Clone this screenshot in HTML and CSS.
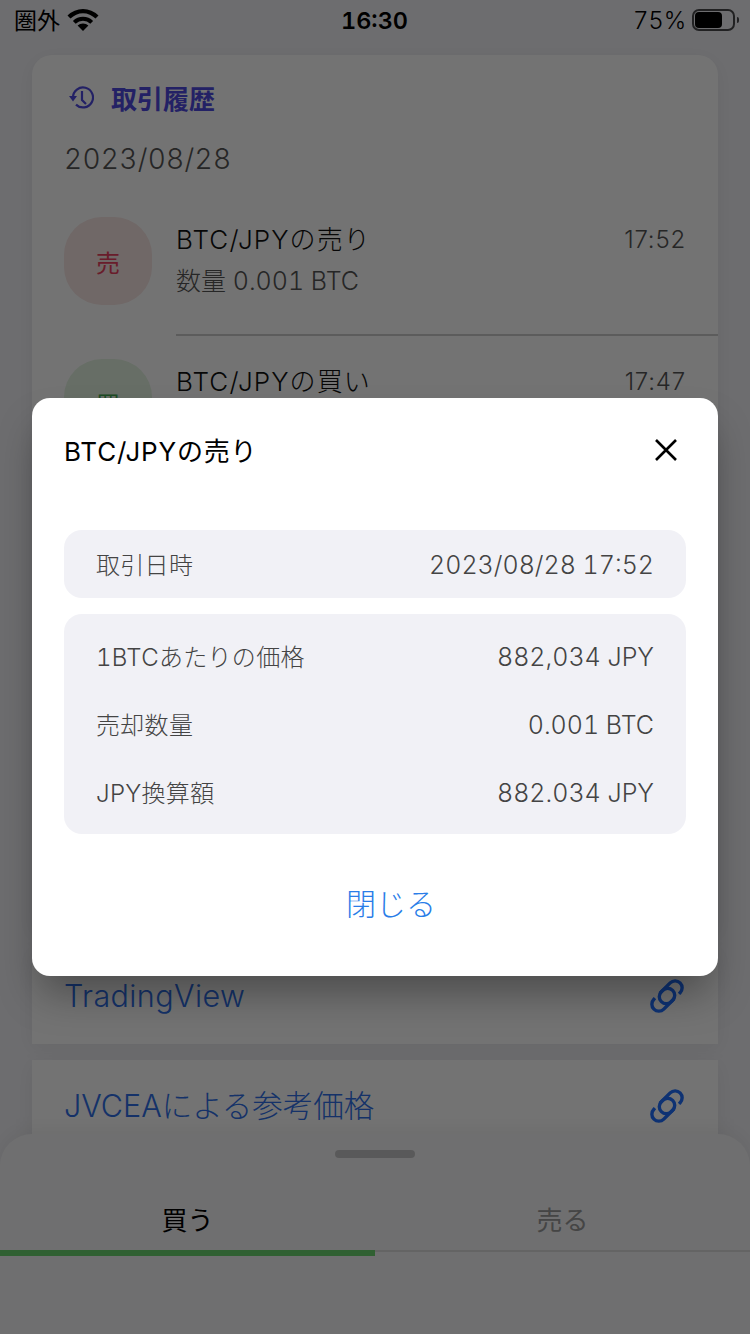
FILE: index.html
```html
<!DOCTYPE html>
<html lang="ja">
  <head>
    <meta charset="utf-8">
    <title>取引履歴</title>
    <link rel="stylesheet" href="styles.css">
  </head>
  <body>
    <div class="screen">
      <!-- Status bar -->
      <div class="status-bar">
        <div class="status-left">
          <span class="carrier">圏外</span>
          <svg class="wifi" viewBox="-1 0 32 22" width="32" height="22">
            <path d="M-.5 6.500A22 22 0 0 1 30.500 6.500L27.500 9.500A17.700 17.700 0 0 0 2.500 9.500Z" />
            <path d="M4.900 11.900A14.300 14.300 0 0 1 25.100 11.900L22.300 14.700A10.300 10.300 0 0 0 7.700 14.700Z" />
            <path d="M9.600 16.600A7.700 7.700 0 0 1 20.400 16.600L15 22Z" />
          </svg>
        </div>
        <div class="status-time">16:30</div>
        <div class="status-right">
          <span>75%</span>
          <div class="battery"><div class="battery-level"></div></div>
          <div class="battery-cap"></div>
        </div>
      </div>

      <!-- History card -->
      <section class="card history">
        <h2 class="history-title">
          <svg viewBox="0 0 28 28" width="28" height="28">
            <path class="line-icon" d="M7 13.500a10 10 0 1 1 3 7.100" />
            <path class="line-icon" d="M16 7V16L20 20" />
            <path class="arrow-icon" d="M3 12H11L7 17.500z" />
          </svg>
          <span>取引履歴</span>
        </h2>
        <div class="history-date">2023/08/28</div>
        <div class="trade">
          <div class="trade-icon sell">売</div>
          <div class="trade-body">
            <div class="trade-top">
              <span>BTC/JPYの売り</span>
              <span class="trade-time">17:52</span>
            </div>
            <div class="trade-sub">数量 0.001 BTC</div>
          </div>
        </div>
        <div class="trade">
          <div class="trade-icon buy">買</div>
          <div class="trade-body">
            <div class="trade-top">
              <span>BTC/JPYの買い</span>
              <span class="trade-time">17:47</span>
            </div>
            <div class="trade-sub">数量 0.001 BTC</div>
          </div>
        </div>
      </section>

      <!-- Links -->
      <a class="card link-card tradingview">
        <span>TradingView</span>
        <svg class="link-icon" viewBox="0 0 34 34" width="34" height="34">
          <g transform="rotate(-45 17 17)">
            <path d="M27 24H28.500a7 7 0 0 0 0-14H16a7 7 0 0 0 0 14H20" />
            <path d="M7 10H5.500a7 7 0 0 0 0 14H18a7 7 0 0 0 0-14H14" />
          </g>
        </svg>
      </a>
      <a class="card link-card jvcea">
        <span>JVCEAによる参考価格</span>
        <svg class="link-icon" viewBox="0 0 34 34" width="34" height="34">
          <g transform="rotate(-45 17 17)">
            <path d="M27 24H28.500a7 7 0 0 0 0-14H16a7 7 0 0 0 0 14H20" />
            <path d="M7 10H5.500a7 7 0 0 0 0 14H18a7 7 0 0 0 0-14H14" />
          </g>
        </svg>
      </a>

      <!-- Bottom sheet -->
      <div class="sheet">
        <div class="sheet-handle"></div>
        <div class="tabs">
          <div class="tab active">買う</div>
          <div class="tab">売る</div>
        </div>
      </div>

      <div class="overlay"></div>

      <!-- Dialog -->
      <div class="dialog">
        <div class="dialog-header">
          <span>BTC/JPYの売り</span>
          <svg viewBox="0 0 24 24" width="24" height="24">
            <path d="M2 2L22 22M22 2L2 22" />
          </svg>
        </div>
        <div class="panel">
          <div class="panel-row"><span class="panel-label">取引日時</span><span class="panel-value">2023/08/28 17:52</span></div>
        </div>
        <div class="panel">
          <div class="panel-row"><span class="panel-label">1BTCあたりの価格</span><span class="panel-value">882,034 JPY</span></div>
          <div class="panel-row"><span class="panel-label">売却数量</span><span class="panel-value">0.001 BTC</span></div>
          <div class="panel-row"><span class="panel-label">JPY換算額</span><span class="panel-value">882.034 JPY</span></div>
        </div>
        <div class="dialog-close">閉じる</div>
      </div>
    </div>
  </body>
</html>
```

FILE: styles.css
```css
/* Global styles */
html, body {
  margin: 0;
  padding: 0;
}

body {
  font-family: Inter, "Noto Sans CJK JP", sans-serif;
  font-variant-numeric: tabular-nums;
  color: #000;
}

.screen {
  position: relative;
  width: 750px;
  height: 1334px;
  overflow: hidden;
  background-color: #f2f2f6;
}

/* Status bar */
.status-bar {
  display: flex;
  justify-content: space-between;
  align-items: center;
  height: 40px;
  padding: 0 11px 0 14px;
  font-size: 23px;
}

.status-left {
  display: flex;
  align-items: center;
  gap: 7px;
  width: 236px;
}

.carrier {
  padding-bottom: 2px;
}

.wifi path {
  fill: #000;
}

.status-time {
  font-weight: 600;
  font-size: 23.5px;
}

.status-right {
  display: flex;
  align-items: center;
  justify-content: flex-end;
  width: 240px;
  font-size: 24px;
  font-weight: 300;
  letter-spacing: -0.2px;
}

.battery {
  box-sizing: border-box;
  width: 43px;
  height: 22px;
  margin-left: 6px;
  padding: 1px;
  border: 2px solid #4a4a4c;
  border-radius: 7px;
}

.battery-level {
  width: 27px;
  height: 16px;
  background-color: #000;
  border-radius: 4px;
}

.battery-cap {
  width: 2px;
  height: 6px;
  margin-left: 2px;
  background-color: #4a4a4c;
  border-radius: 0 2px 2px 0;
}

/* Cards */
.card {
  display: block;
  box-sizing: border-box;
  margin: 0 32px;
  background-color: #fff;
  box-shadow: 0 4px 20px rgba(0,0,0,0.06);
}

/* History card */
.history {
  height: 877px;
  margin-top: 15px;
  padding: 24px 0 0 32px;
  border-radius: 20px 20px 0 0;
}

.history-title {
  display: flex;
  align-items: center;
  gap: 19px;
  margin: 0;
  height: 36px;
  font-size: 26px;
  font-weight: 700;
  color: #4f4ae0;
}

.history-title svg {
  margin: 2px -2px 0 2px;
}

.line-icon {
  fill: none;
  stroke: #4f4ae0;
  stroke-width: 2.2;
}

.arrow-icon {
  fill: #4f4ae0;
}

.history-date {
  margin-top: 26px;
  margin-bottom: 15px;
  font-size: 28px;
  font-weight: 300;
  letter-spacing: 0.3px;
  line-height: 36px;
  color: #555;
}

.trade {
  display: flex;
  gap: 24px;
  height: 142px;
  padding-top: 25px;
  box-sizing: border-box;
}

.trade-icon {
  display: flex;
  align-items: center;
  justify-content: center;
  flex: none;
  width: 88px;
  height: 88px;
  border-radius: 38px;
  font-size: 24px;
}

.trade-icon.sell {
  background-color: #f8e6e4;
  color: #e94060;
}

.trade-icon.buy {
  background-color: #e4f4e2;
  color: #40a850;
}

.trade-body {
  flex: 1;
  height: 117px;
  padding-right: 32px;
  border-bottom: 2px solid #ccc;
}

.trade-top {
  display: flex;
  justify-content: space-between;
  align-items: center;
  margin-top: 1px;
  font-size: 26px;
  font-weight: 300;
  letter-spacing: 1.1px;
  line-height: 44px;
  color: #111;
}

.trade-time {
  font-size: 24px;
  font-variant-numeric: normal;
  letter-spacing: 0.8px;
  color: #555;
}

.trade-sub {
  font-size: 25px;
  font-weight: 300;
  line-height: 38px;
  color: #555;
}

/* Link cards */
.link-card {
  display: flex;
  justify-content: space-between;
  align-items: center;
  padding: 0 34px 0 32px;
  font-size: 30.5px;
  font-weight: 300;
  color: #2f6fe8;
}

.tradingview {
  height: 96px;
  margin-top: 16px;
  letter-spacing: 0.4px;
}

.tradingview span {
  padding-bottom: 1px;
}

.jvcea {
  height: 92px;
  margin-top: 16px;
}

.jvcea span {
  padding-bottom: 5px;
}

.link-icon path {
  fill: none;
  stroke: #1f6fff;
  stroke-width: 3.4;
}

/* Bottom sheet */
.sheet {
  position: absolute;
  left: 0;
  right: 0;
  bottom: 0;
  height: 200px;
  background-color: #f6f6f8;
  border-radius: 32px 32px 0 0;
  box-shadow: 0 -4px 20px rgba(0,0,0,0.06);
}

.sheet-handle {
  width: 80px;
  height: 8px;
  margin: 16px auto 0;
  background-color: #c6c6c8;
  border-radius: 5px;
}

.tabs {
  display: flex;
  margin-top: 30px;
}

.tab {
  flex: 1;
  height: 64px;
  padding-top: 13px;
  box-sizing: border-box;
  text-align: center;
  font-size: 26px;
  line-height: 40px;
  color: #999;
  border-bottom: 2px solid #ddd;
}

.tab.active {
  height: 68px;
  color: #000;
  border-bottom: 6px solid #6bd46f;
}

/* Dialog */
.overlay {
  position: absolute;
  inset: 0;
  background-color: rgba(0,0,0,0.55);
}

.dialog {
  position: absolute;
  left: 32px;
  top: 398px;
  box-sizing: border-box;
  width: 686px;
  height: 578px;
  padding: 0 32px;
  background-color: #fff;
  border-radius: 18px;
  box-shadow: 0 24px 40px -8px rgba(0,0,0,0.35);
}

.dialog-header {
  display: flex;
  justify-content: space-between;
  align-items: center;
  height: 104px;
  margin-bottom: 28px;
  font-size: 26px;
  letter-spacing: 0.8px;
}

.dialog-header span {
  padding-bottom: 2px;
}

.dialog-header svg {
  margin-right: 8px;
}

.dialog-header svg path {
  fill: none;
  stroke: #000;
  stroke-width: 2.6;
}

.panel {
  margin-bottom: 16px;
  padding: 0 32px;
  background-color: #f1f1f6;
  border-radius: 18px;
}

.panel + .panel {
  padding: 8px 32px;
}

.panel-row {
  display: flex;
  justify-content: space-between;
  align-items: center;
  height: 68px;
  font-size: 24px;
  font-weight: 300;
  color: #444;
}

.panel-label {
  padding-bottom: 2px;
  letter-spacing: 0.3px;
}

.panel-value {
  padding-top: 2px;
  font-size: 25px;
}

.dialog-close {
  margin-top: 38px;
  padding-left: 32px;
  text-align: center;
  font-size: 30px;
  font-weight: 300;
  line-height: 64px;
  color: #2a7de8;
}
```
